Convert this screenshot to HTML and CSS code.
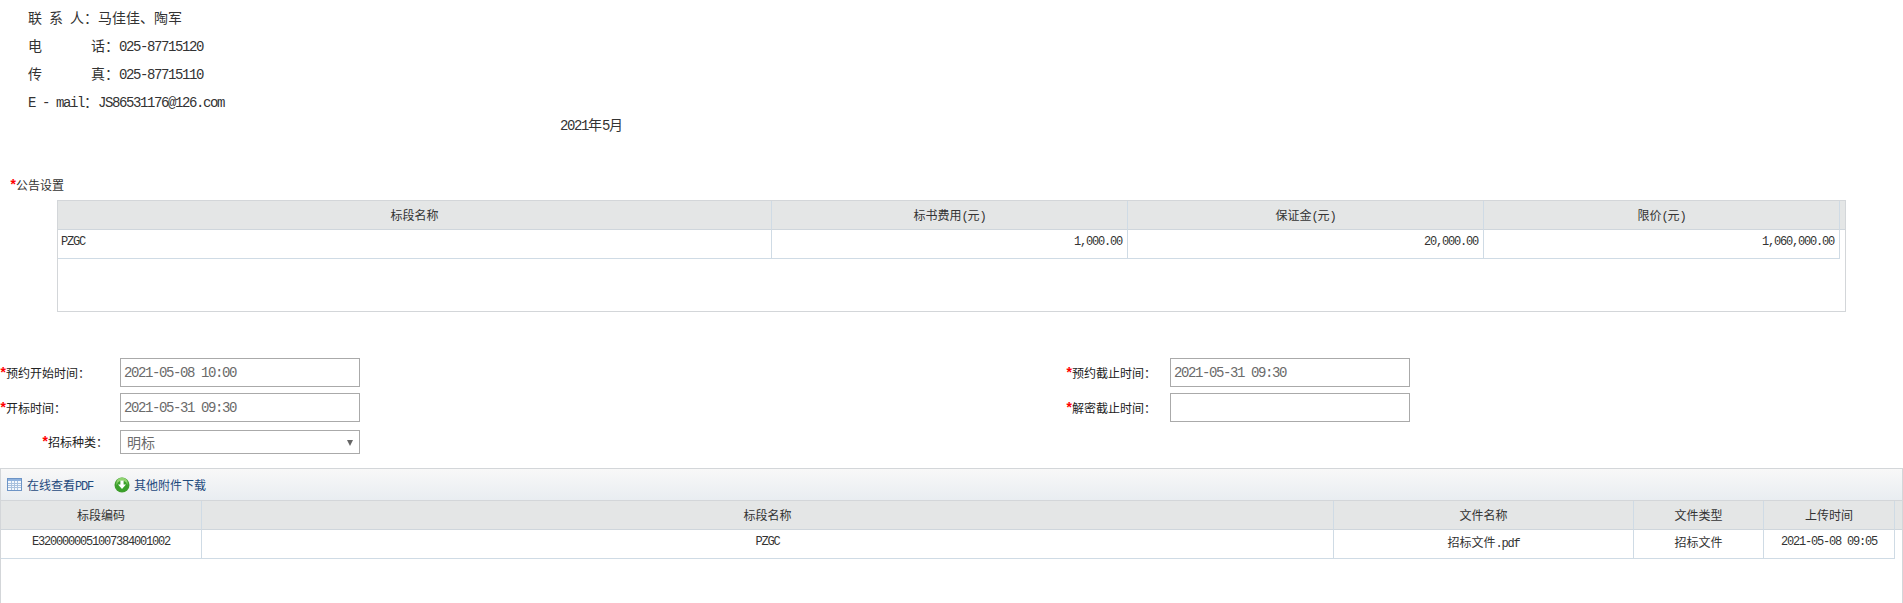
FILE: index.html
```html
<!DOCTYPE html>
<html lang="zh">
<head>
<meta charset="utf-8">
<title>公告设置</title>
<link rel="stylesheet" href="styles.css">
</head>
<body>
<div class="contact">
  <p class="line">联<span class="lat"> </span>系<span class="lat"> </span>人&#xFF1A;马佳佳、陶军</p>
  <p class="line">电<span class="lat">&nbsp;&nbsp;&nbsp;&nbsp;&nbsp;&nbsp;&nbsp;</span>话&#xFF1A;<span class="lat">025-87715120</span></p>
  <p class="line">传<span class="lat">&nbsp;&nbsp;&nbsp;&nbsp;&nbsp;&nbsp;&nbsp;</span>真&#xFF1A;<span class="lat">025-87715110</span></p>
  <p class="line"><span class="lat">E - mail</span>&#xFF1A;<span class="lat">JS86531176@126.com</span></p>
</div>
<p class="date"><span class="lat">2021</span>年<span class="lat">5</span>月</p>
<div class="section-title"><span class="star">*</span>公告设置</div>
<div class="grid grid-notice">
  <div class="row head cols-notice">
    <div class="cell">标段名称</div>
    <div class="cell">标书费用<span class="lat">(</span>元<span class="lat">)</span></div>
    <div class="cell">保证金<span class="lat">(</span>元<span class="lat">)</span></div>
    <div class="cell">限价<span class="lat">(</span>元<span class="lat">)</span></div>
    <div class="gutter"></div>
  </div>
  <div class="row body cols-notice">
    <div class="cell left lat">PZGC</div>
    <div class="cell right lat">1,000.00</div>
    <div class="cell right lat">20,000.00</div>
    <div class="cell right lat">1,060,000.00</div>
  </div>
</div>
<form class="form">
  <div class="form-row">
    <label class="label"><span class="star">*</span>预约开始时间&#xFF1A;</label>
    <input class="field" type="text" readonly value="2021-05-08 10:00">
    <label class="label label-second"><span class="star">*</span>预约截止时间&#xFF1A;</label>
    <input class="field" type="text" readonly value="2021-05-31 09:30">
  </div>
  <div class="form-row row-two">
    <label class="label"><span class="star">*</span>开标时间&#xFF1A;</label>
    <input class="field" type="text" readonly value="2021-05-31 09:30">
    <label class="label label-second"><span class="star">*</span>解密截止时间&#xFF1A;</label>
    <input class="field" type="text" readonly>
  </div>
  <div class="form-row row-three">
    <label class="label label-indent"><span class="star">*</span>招标种类&#xFF1A;</label>
    <div class="select-wrap">
      <select class="select"><option>明标</option></select>
    </div>
  </div>
</form>
<div class="panel">
  <div class="toolbar">
    <a class="tool tool-pdf">
      <svg class="icon-table" width="15" height="13" viewBox="0 0 15 13">
        <rect x="0.5" y="0.5" width="14" height="12" fill="#f4f8fd" stroke="#6d94c6"/>
        <rect x="1" y="1" width="13" height="2" fill="#8fb2de"/>
        <path d="M1 5.5H14M1 7.5H14M1 9.5H14M4.5 3V12M7.5 3V12M10.5 3V12" stroke="#a9c1de" stroke-width="1" fill="none"/>
      </svg>
      <span>在线查看<span class="lat">PDF</span></span>
    </a>
    <a class="tool tool-other">
      <svg class="icon-down" width="16" height="16" viewBox="0 0 16 16">
        <circle cx="8" cy="8" r="7.5" fill="#3f9e2f"/>
        <circle cx="8" cy="6" r="5.6" fill="#8fd36f"/>
        <circle cx="8" cy="9" r="5.4" fill="#39a12a"/>
        <path d="M6.4 3.5H9.6V7.5H12L8 12L4 7.5H6.4Z" fill="#fff"/>
      </svg>
      <span>其他附件下载</span>
    </a>
  </div>
  <div class="row head cols-files">
    <div class="cell">标段编码</div>
    <div class="cell">标段名称</div>
    <div class="cell">文件名称</div>
    <div class="cell">文件类型</div>
    <div class="cell">上传时间</div>
    <div class="gutter"></div>
  </div>
  <div class="row body cols-files">
    <div class="cell lat">E3200000051007384001002</div>
    <div class="cell lat">PZGC</div>
    <div class="cell">招标文件<span class="lat">.pdf</span></div>
    <div class="cell">招标文件</div>
    <div class="cell lat">2021-05-08 09:05</div>
  </div>
</div>
</body>
</html>
```
FILE: styles.css
```css
* {
  box-sizing: border-box;
}

html,
body {
  margin: 0;
  padding: 0;
  background: #fff;
}

body {
  height: 603px;
  overflow: hidden;
  font-family: "Noto Sans CJK SC", "Liberation Sans", sans-serif;
  font-size: 12px;
  color: #333;
}

p {
  margin: 0;
}

.lat {
  font-family: "Liberation Mono", "Noto Sans CJK SC", monospace;
  letter-spacing: -0.1em;
}

.contact {
  padding: 3px 0 1px 28px;
  font-size: 14px;
}

.line {
  height: 28px;
  line-height: 28px;
  white-space: pre;
}

.date {
  height: 18px;
  padding-left: 560px;
  font-size: 14px;
  line-height: 16px;
}

.section-title {
  height: 16px;
  margin-top: 43px;
  padding-left: 10px;
  line-height: 16px;
}

.star {
  margin-left: -1px;
  font-family: "Liberation Mono", monospace;
  font-size: 14px;
  font-weight: 700;
  letter-spacing: -1.4px;
  color: #f00;
}

.grid {
  border: 1px solid #d3d6d9;
}

.grid-notice {
  width: 1789px;
  height: 112px;
  margin: 7px 0 0 57px;
}

.row {
  display: grid;
  height: 29px;
}

.cols-notice {
  grid-template-columns: 714px 356px 356px 356px 5px;
}

.cols-files {
  grid-template-columns: 201px 1132px 300px 130px 131px 7px;
}

.cell {
  border-right: 1px solid #cfdbe5;
  border-bottom: 1px solid #cfdbe5;
  text-align: center;
  white-space: nowrap;
  overflow: hidden;
}

.head {
  background: #e4e6e6;
  line-height: 28px;
}

.head .cell,
.gutter {
  border-bottom: 1px solid #cfd6dc;
}

.body .cell {
  padding-bottom: 4px;
  line-height: 24px;
}

.body .left {
  padding-left: 3px;
  text-align: left;
}

.body .right {
  padding-right: 5px;
  text-align: right;
}

.form {
  margin-top: 46px;
}

.form-row {
  display: flex;
  align-items: center;
  height: 29px;
}

.row-two {
  margin-top: 6px;
}

.row-three {
  height: 24px;
  margin-top: 8px;
}

.label {
  flex: 0 0 120px;
  color: #222;
  white-space: nowrap;
}

.label-second {
  flex-basis: 104px;
  margin-left: 706px;
}

.label-indent {
  padding-left: 42px;
}

.field {
  flex: 0 0 240px;
  height: 29px;
  margin: 0;
  padding: 0 0 0 3px;
  border: 1px solid #aaa;
  border-radius: 0;
  outline: none;
  background: #fff;
  font-family: "Liberation Mono", monospace;
  font-size: 14px;
  letter-spacing: -1.4px;
  color: #6b6b6b;
}

.select-wrap {
  position: relative;
  flex: 0 0 240px;
  height: 24px;
}

.select-wrap::after {
  content: "";
  position: absolute;
  top: 10px;
  right: 7px;
  border-top: 6px solid #666;
  border-left: 3px solid transparent;
  border-right: 3px solid transparent;
}

.select {
  display: block;
  width: 100%;
  height: 100%;
  margin: 0;
  padding: 0 0 0 6px;
  border: 1px solid #aaa;
  border-radius: 0;
  outline: none;
  background: #fff;
  appearance: none;
  font-family: "Noto Sans CJK SC", sans-serif;
  font-size: 14px;
  color: #6b6b6b;
}

.panel {
  height: 135px;
  margin-top: 14px;
  border: 1px solid #d3d6d9;
  border-bottom: 0;
}

.toolbar {
  display: flex;
  align-items: center;
  height: 32px;
  border-bottom: 1px solid #d3d6d9;
  background: linear-gradient(#f8f8f8, #e9edf1);
}

.tool {
  display: flex;
  align-items: center;
  color: #1f4a7d;
  white-space: nowrap;
}

.tool-pdf {
  gap: 5px;
  margin-left: 6px;
}

.tool-other {
  gap: 4px;
  margin-left: 21px;
}
```
